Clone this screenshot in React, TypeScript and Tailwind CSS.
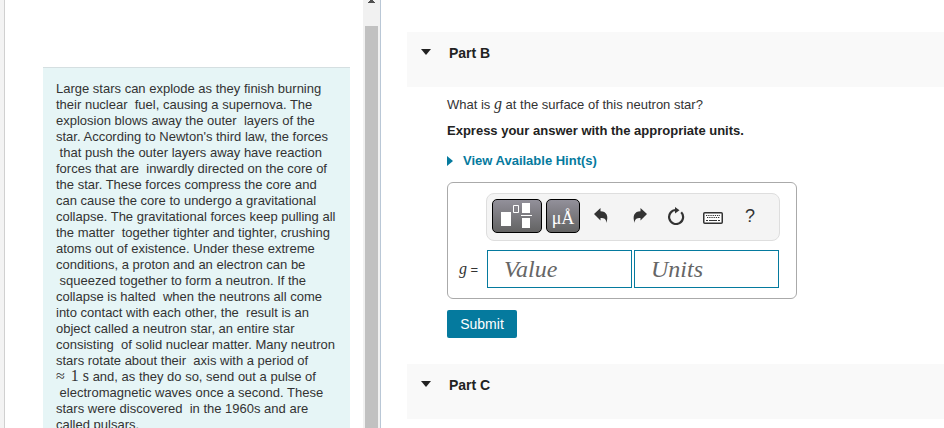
import React from "react";

const introBefore = `Large stars can explode as they finish burning
their nuclear  fuel, causing a supernova. The
explosion blows away the outer  layers of the
star. According to Newton's third law, the forces
 that push the outer layers away have reaction
forces that are  inwardly directed on the core of
the star. These forces compress the core and
can cause the core to undergo a gravitational
collapse. The gravitational forces keep pulling all
the matter  together tighter and tighter, crushing
atoms out of existence. Under these extreme
conditions, a proton and an electron can be
 squeezed together to form a neutron. If the
collapse is halted  when the neutrons all come
into contact with each other, the  result is an
object called a neutron star, an entire star
consisting  of solid nuclear matter. Many neutron
stars rotate about their  axis with a period of
`;

const introAfter = ` and, as they do so, send out a pulse of
 electromagnetic waves once a second. These
stars were discovered  in the 1960s and are
called pulsars.`;

const serif = "font-['Liberation_Serif',serif]";

function PartHeader({ title }: { title: string }) {
  return (
    <h2 className="bg-[#f9f9f9]">
      <button className="flex h-[55px] w-full items-start pt-[11px] pl-3.5 text-left text-sm leading-5 font-bold text-[#222]">
        <svg className="mt-1.5 mr-[18px] h-1.5 w-2.5" viewBox="0 0 10 6" fill="#222" aria-hidden="true">
          <path d="M0 0h10L5 6z" />
        </svg>
        {title}
      </button>
    </h2>
  );
}

function IntroPane() {
  return (
    <aside className="flex w-[381px] shrink-0 border-r border-[#b9c7d6]">
      <div className="w-[5px] border-r border-[#d0d0d0] bg-[#f3f3f3]" />
      <div className="flex-1 overflow-hidden pt-[67px] pr-[13px] pl-[38px]">
        <div className="border-t border-[#d5dfe1] bg-[#e6f5f6] px-[13px] pt-[13px] pb-8">
          <p className="text-[13px] leading-4 whitespace-pre text-[#333]">
            {introBefore}
            <span className={`${serif} text-base leading-3`}>≈</span>
            <span className={`${serif} ml-1.5 text-base leading-3`}>1</span>
            <span className={`${serif} ml-1 text-base leading-3`}>s</span>
            {introAfter}
          </p>
        </div>
      </div>
      <div className="flex w-[17px] flex-col items-center bg-[#f1f1f1]">
        <svg className="h-[3px] w-[7px]" viewBox="0 0 7 3" fill="#505050" aria-hidden="true">
          <path d="M2 0h3v1h1v1h1v1H0V2h1V1h1z" />
        </svg>
        <div className="mt-[23px] w-[13px] flex-1 bg-[#c1c1c1]" />
      </div>
    </aside>
  );
}

function Toolbar() {
  const dark =
    "h-[34px] rounded-[5px] border border-black bg-linear-to-b from-[#92909a] to-[#636363] text-white flex items-center justify-center";
  return (
    <div className="flex h-12 items-center rounded-lg border border-[#dedede] bg-[#f4f4f4] pb-0.5 pl-[5px]">
      <button className={`${dark} w-[50px]`} aria-label="Templates">
        <svg className="h-[26px] w-8" viewBox="0 0 32 26" fill="#fff" aria-hidden="true">
          <path d="M0 9h10v14H0zM21 0h8v10h-8zM21 15h8v10h-8zM20 12h11v1H20z" />
          <path d="M12.5 2.5h5v7h-5z" fill="none" stroke="#fff" />
        </svg>
      </button>
      <button className={`${dark} ml-1 w-[34px] pt-1 ${serif} text-lg leading-6`} aria-label="Symbols">
        μÅ
      </button>
      <button className="ml-3.5" aria-label="Undo">
        <svg className="h-4 w-[15px]" viewBox="0 0 15 16" fill="#333" aria-hidden="true">
          <path d="M0 6 6.5 0v3.2C12.5 3.2 15 8 12.2 15c.2-4-1.7-5-5.7-5v2.5z" />
        </svg>
      </button>
      <button className="ml-[23px]" aria-label="Redo">
        <svg className="h-4 w-[15px]" viewBox="0 0 15 16" fill="#333" aria-hidden="true">
          <path d="M15 6 8.5 0v3.2C2.5 3.2 0 8 2.8 15c-.2-4 1.7-5 5.7-5v2.5z" />
        </svg>
      </button>
      <button className="ml-5" aria-label="Reset">
        <svg className="h-[18px] w-[18px]" viewBox="0 0 18 18" aria-hidden="true">
          <path d="M14.2 5.2A7 7 0 1 1 9 3" fill="none" stroke="#333" strokeWidth="2.2" />
          <path d="M8 0 12.5 3.2 8 6.5z" fill="#333" />
        </svg>
      </button>
      <button className="mt-1 ml-[18px]" aria-label="Keyboard shortcuts">
        <svg className="h-3 w-5" viewBox="0 0 20 12" aria-hidden="true">
          <rect x=".75" y=".75" width="18.5" height="10.5" rx="1" fill="#fff" stroke="#333" strokeWidth="1.5" />
          <path d="M3 3.5h14M4 5.5h13" stroke="#333" strokeWidth="1" strokeDasharray="1.3 .9" />
          <path d="M3 8.5h2M6 8.5h8M15 8.5h2" stroke="#333" strokeWidth="1" />
        </svg>
      </button>
      <button className="ml-[22px] text-lg leading-6 text-[#333]" aria-label="Help">
        ?
      </button>
    </div>
  );
}

function AnswerBox() {
  const field = `h-[38px] w-[145px] border border-[#057a9e] bg-white pl-4 ${serif} text-2xl italic text-[#333] placeholder:text-[#666] outline-none`;
  return (
    <div className="mt-[13px] w-[350px] rounded-md border border-[#aaa] pt-2.5 pr-4 pb-2.5 pl-[38px]">
      <Toolbar />
      <div className="-ml-[27px] mt-[9px] flex items-center">
        <label htmlFor="value" className="w-7 whitespace-nowrap">
          <i className={`${serif} text-base leading-4`}>g</i> =
        </label>
        <input id="value" placeholder="Value" className={field} />
        <input aria-label="Units" placeholder="Units" className={`${field} ml-0.5`} />
      </div>
    </div>
  );
}

export default function App() {
  return (
    <div className="flex h-screen overflow-hidden bg-white font-['Liberation_Sans',Arial,sans-serif] text-[13px] leading-4 text-[#333]">
      <IntroPane />
      <main className="min-w-0 flex-1 overflow-hidden pt-8 pl-[26px]">
        <PartHeader title="Part B" />
        <section className="pt-[9px] pb-[26px] pl-10">
          <p className="text-[#333]">
            What is <i className={`${serif} text-base leading-4`}>g</i> at the surface of this neutron star?
          </p>
          <p className="mt-2.5 font-bold text-[#222]">Express your answer with the appropriate units.</p>
          <button className="mt-3.5 flex items-center font-bold text-[#057a9e]">
            <svg className="mr-2.5 h-2.5 w-1.5" viewBox="0 0 6 10" fill="#057a9e" aria-hidden="true">
              <path d="M0 0 6 5 0 10z" />
            </svg>
            View Available Hint(s)
          </button>
          <AnswerBox />
          <button className="mt-[11px] h-7 w-[70px] rounded-xs bg-[#057a9e] text-sm text-white">Submit</button>
        </section>
        <PartHeader title="Part C" />
      </main>
    </div>
  );
}
